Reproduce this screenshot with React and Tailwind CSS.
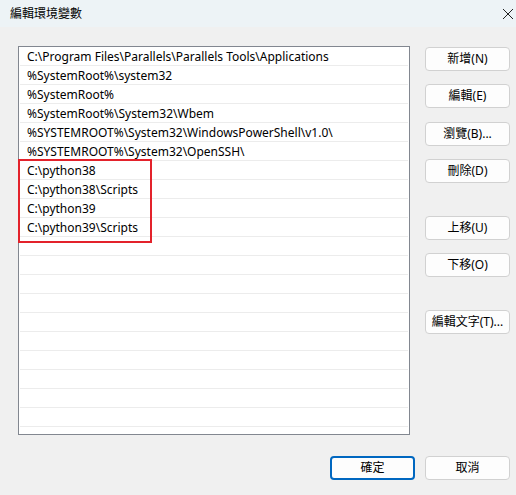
import React from "react";

const rows = [
  "C:\\Program Files\\Parallels\\Parallels Tools\\Applications",
  "%SystemRoot%\\system32",
  "%SystemRoot%",
  "%SystemRoot%\\System32\\Wbem",
  "%SYSTEMROOT%\\System32\\WindowsPowerShell\\v1.0\\",
  "%SYSTEMROOT%\\System32\\OpenSSH\\",
  "C:\\python38",
  "C:\\python38\\Scripts",
  "C:\\python39",
  "C:\\python39\\Scripts",
  "", "", "", "", "", "", "", "", "", "", "", "",
];

const font = { fontFamily: '"Noto Sans", "Noto Sans CJK TC", sans-serif' };

function Btn({ children, className = "" }) {
  return (
    <div
      className={
        "w-[85px] h-[24px] rounded-[4px] border border-[#d1d1d1] bg-[#fdfdfd] flex items-center justify-center text-[12px] text-black " +
        className
      }
    >
      {children}
    </div>
  );
}

export default function App() {
  return (
    <div
      className="relative w-[516px] h-[495px] bg-[#f0f0f0] flex flex-col overflow-hidden"
      style={font}
    >
      <div className="h-[27px] bg-[#edf3f6] flex items-center justify-between pl-[10px] pr-[1px]">
        <span className="text-[12px] text-black leading-none">編輯環境變數</span>
        <svg width="12" height="12" viewBox="0 0 12 12" className="mr-[1px]">
          <path d="M1 1 L11 11 M11 1 L1 11" stroke="#222" strokeWidth="1" />
        </svg>
      </div>
      <div className="flex pl-[18px] pt-[19px]">
        <div className="relative w-[392px] h-[389px] border border-[#828790] bg-white overflow-hidden">
          {rows.map((r, i) => (
            <div
              key={i}
              className="h-[19px] mx-[1px] border-b border-[#ececec] flex items-center pl-[7px] pt-[1px] text-[12px] leading-none text-black whitespace-nowrap"
              style={{ fontFamily: '"Noto Sans", "Noto Sans CJK TC", sans-serif' }}
            >
              {r}
            </div>
          ))}
        </div>
        <div className="flex flex-col ml-[15px] pt-[1px]">
          <Btn>新增(N)</Btn>
          <Btn className="mt-[13px]">編輯(E)</Btn>
          <Btn className="mt-[14px]">瀏覽(B)...</Btn>
          <Btn className="mt-[13px]">刪除(D)</Btn>
          <Btn className="mt-[33px]">上移(U)</Btn>
          <Btn className="mt-[13px]">下移(O)</Btn>
          <Btn className="mt-[33px]">編輯文字(T)...</Btn>
        </div>
      </div>
      <div className="flex justify-end gap-[10px] pr-[6px] mt-[21px]">
        <div className="w-[85px] h-[24px] rounded-[4px] border-2 border-[#0067c0] bg-[#fdfdfd] flex items-center justify-center text-[12px] text-black">
          確定
        </div>
        <Btn>取消</Btn>
      </div>
      <div className="absolute left-[18px] top-[159px] w-[134px] h-[84px] border-2 border-[#e3222b] pointer-events-none" />
    </div>
  );
}
